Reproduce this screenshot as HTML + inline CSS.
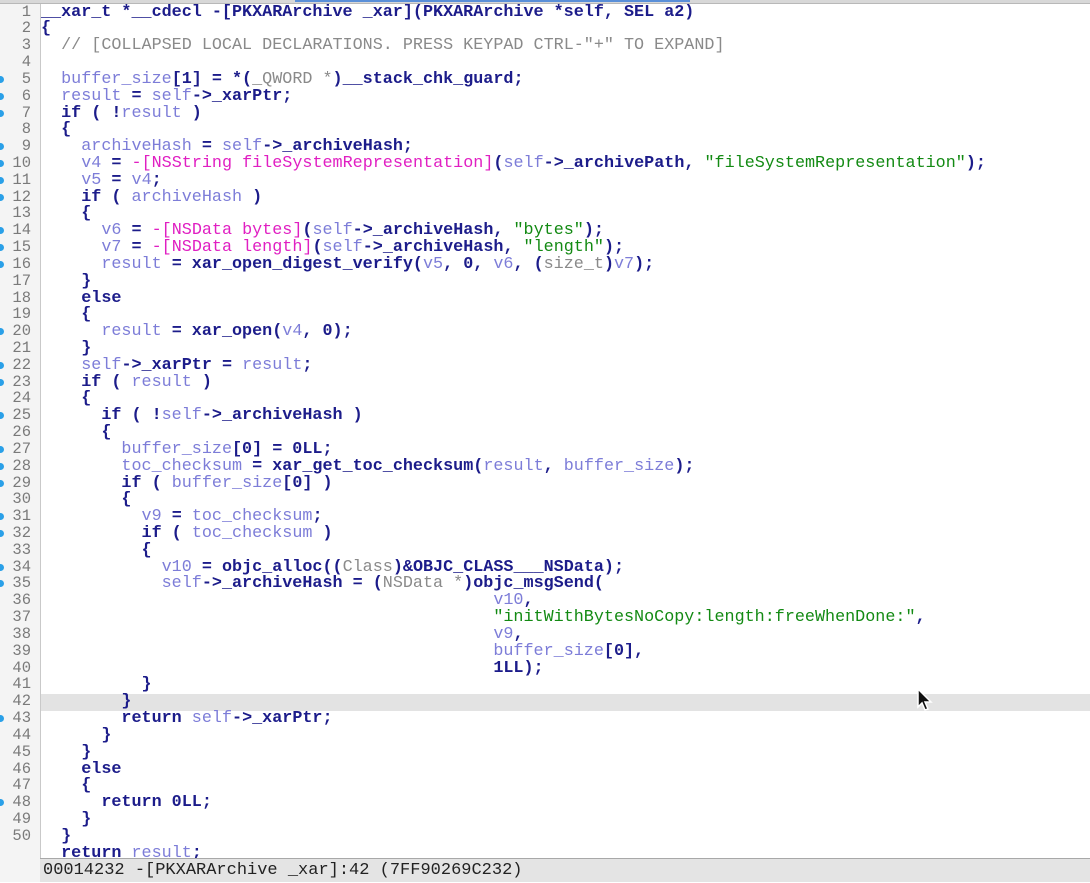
<!DOCTYPE html>
<html><head><meta charset="utf-8"><style>
html,body{margin:0;padding:0;}
body{width:1090px;height:882px;overflow:hidden;background:#fff;position:relative;font-family:"Liberation Mono",monospace;}
#top{position:absolute;left:0;top:0;width:1090px;height:3px;background:#d8d8d8;border-bottom:1px solid #b8b8b8;}
#topblue{position:absolute;left:295px;top:0;width:395px;height:2px;background:#5a8fd8;}
#gut{position:absolute;left:0;top:3px;width:40px;height:857px;background:#f4f4f4;border-right:1px solid #c9c9c9;}
.hl{position:absolute;left:41px;width:1049px;top:694px;height:17px;background:#e3e3e3;}
.ln{position:absolute;left:0;width:31px;text-align:right;font-size:15.5px;color:#7a7a7a;height:17px;line-height:17px;}
.dot{position:absolute;left:-3px;width:7px;height:7px;border-radius:4px;background:#2aa0e8;}
.l{position:absolute;left:41px;white-space:pre;font-size:16.75px;line-height:17px;height:17px;color:#2a2a9a;}
.k{color:#1c1c8a;font-weight:bold;}
.v{color:#7d7dd8;}
.s{color:#138a13;}
.m{color:#e01fc2;}
.c{color:#8a8a8a;}
.n{color:#8a8a8a;}
#status{position:absolute;left:40px;top:858px;width:1050px;height:24px;background:#e4e4e4;border-top:1px solid #a8a8a8;font-size:17px;line-height:24px;color:#222;white-space:pre;padding-left:3px;box-sizing:border-box;}
#sleft{position:absolute;left:0;top:858px;width:40px;height:24px;background:#f4f4f4;}
</style></head><body>
<div id="gut"></div>
<div class="hl"></div>
<div id="top"></div><div id="topblue"></div>
<div id="lines"></div>
<script>
var code=[
'<span class="k">__xar_t *__cdecl -[PKXARArchive _xar](PKXARArchive *self, SEL a2)</span>',
'<span class="k">{</span>',
'  <span class="c">// [COLLAPSED LOCAL DECLARATIONS. PRESS KEYPAD CTRL-"+" TO EXPAND]</span>',
'',
'  <span class="v">buffer_size</span><span class="k">[1] = *(</span><span class="n">_QWORD *</span><span class="k">)__stack_chk_guard;</span>',
'  <span class="v">result</span> <span class="k">=</span> <span class="v">self</span><span class="k">->_xarPtr;</span>',
'  <span class="k">if ( !</span><span class="v">result</span> <span class="k">)</span>',
'  <span class="k">{</span>',
'    <span class="v">archiveHash</span> <span class="k">=</span> <span class="v">self</span><span class="k">->_archiveHash;</span>',
'    <span class="v">v4</span> <span class="k">=</span> <span class="m">-[NSString fileSystemRepresentation]</span><span class="k">(</span><span class="v">self</span><span class="k">->_archivePath, </span><span class="s">"fileSystemRepresentation"</span><span class="k">);</span>',
'    <span class="v">v5</span> <span class="k">=</span> <span class="v">v4</span><span class="k">;</span>',
'    <span class="k">if (</span> <span class="v">archiveHash</span> <span class="k">)</span>',
'    <span class="k">{</span>',
'      <span class="v">v6</span> <span class="k">=</span> <span class="m">-[NSData bytes]</span><span class="k">(</span><span class="v">self</span><span class="k">->_archiveHash, </span><span class="s">"bytes"</span><span class="k">);</span>',
'      <span class="v">v7</span> <span class="k">=</span> <span class="m">-[NSData length]</span><span class="k">(</span><span class="v">self</span><span class="k">->_archiveHash, </span><span class="s">"length"</span><span class="k">);</span>',
'      <span class="v">result</span> <span class="k">= xar_open_digest_verify(</span><span class="v">v5</span><span class="k">, 0, </span><span class="v">v6</span><span class="k">, (</span><span class="n">size_t</span><span class="k">)</span><span class="v">v7</span><span class="k">);</span>',
'    <span class="k">}</span>',
'    <span class="k">else</span>',
'    <span class="k">{</span>',
'      <span class="v">result</span> <span class="k">= xar_open(</span><span class="v">v4</span><span class="k">, 0);</span>',
'    <span class="k">}</span>',
'    <span class="v">self</span><span class="k">->_xarPtr =</span> <span class="v">result</span><span class="k">;</span>',
'    <span class="k">if (</span> <span class="v">result</span> <span class="k">)</span>',
'    <span class="k">{</span>',
'      <span class="k">if ( !</span><span class="v">self</span><span class="k">->_archiveHash )</span>',
'      <span class="k">{</span>',
'        <span class="v">buffer_size</span><span class="k">[0] = 0LL;</span>',
'        <span class="v">toc_checksum</span> <span class="k">= xar_get_toc_checksum(</span><span class="v">result</span><span class="k">, </span><span class="v">buffer_size</span><span class="k">);</span>',
'        <span class="k">if (</span> <span class="v">buffer_size</span><span class="k">[0] )</span>',
'        <span class="k">{</span>',
'          <span class="v">v9</span> <span class="k">=</span> <span class="v">toc_checksum</span><span class="k">;</span>',
'          <span class="k">if (</span> <span class="v">toc_checksum</span> <span class="k">)</span>',
'          <span class="k">{</span>',
'            <span class="v">v10</span> <span class="k">= objc_alloc((</span><span class="n">Class</span><span class="k">)&amp;OBJC_CLASS___NSData);</span>',
'            <span class="v">self</span><span class="k">->_archiveHash = (</span><span class="n">NSData *</span><span class="k">)objc_msgSend(</span>',
'                                             <span class="v">v10</span><span class="k">,</span>',
'                                             <span class="s">"initWithBytesNoCopy:length:freeWhenDone:"</span><span class="k">,</span>',
'                                             <span class="v">v9</span><span class="k">,</span>',
'                                             <span class="v">buffer_size</span><span class="k">[0],</span>',
'                                             <span class="k">1LL);</span>',
'          <span class="k">}</span>',
'        <span class="k">}</span>',
'        <span class="k">return</span> <span class="v">self</span><span class="k">->_xarPtr;</span>',
'      <span class="k">}</span>',
'    <span class="k">}</span>',
'    <span class="k">else</span>',
'    <span class="k">{</span>',
'      <span class="k">return 0LL;</span>',
'    <span class="k">}</span>',
'  <span class="k">}</span>',
'  <span class="k">return</span> <span class="v">result</span><span class="k">;</span>'
];
var dots=[5,6,7,9,10,11,12,14,15,16,20,22,23,25,27,28,29,31,32,34,35,43,48];
var h='';
for(var i=0;i<code.length;i++){
  var t=(3.6+i*16.82).toFixed(2);
  h+='<div class="l" style="top:'+t+'px">'+code[i]+'</div>';
  if(i<50){
    h+='<div class="ln" style="top:'+t+'px">'+(i+1)+'</div>';
    if(dots.indexOf(i+1)>=0) h+='<div class="dot" style="top:'+(parseFloat(t)+5)+'px"></div>';
  }
}
document.getElementById('lines').innerHTML=h;
</script>
<div id="sleft"></div>
<div id="status">00014232 -[PKXARArchive _xar]:42 (7FF90269C232)</div>
<svg style="position:absolute;left:915px;top:687px" width="20" height="28" viewBox="0 0 20 28"><path d="M3 2 L3 20 L7 16 L10 23 L13 22 L10 15 L16 15 Z" fill="#111" stroke="#fff" stroke-width="1.5"/></svg>
</body></html>
